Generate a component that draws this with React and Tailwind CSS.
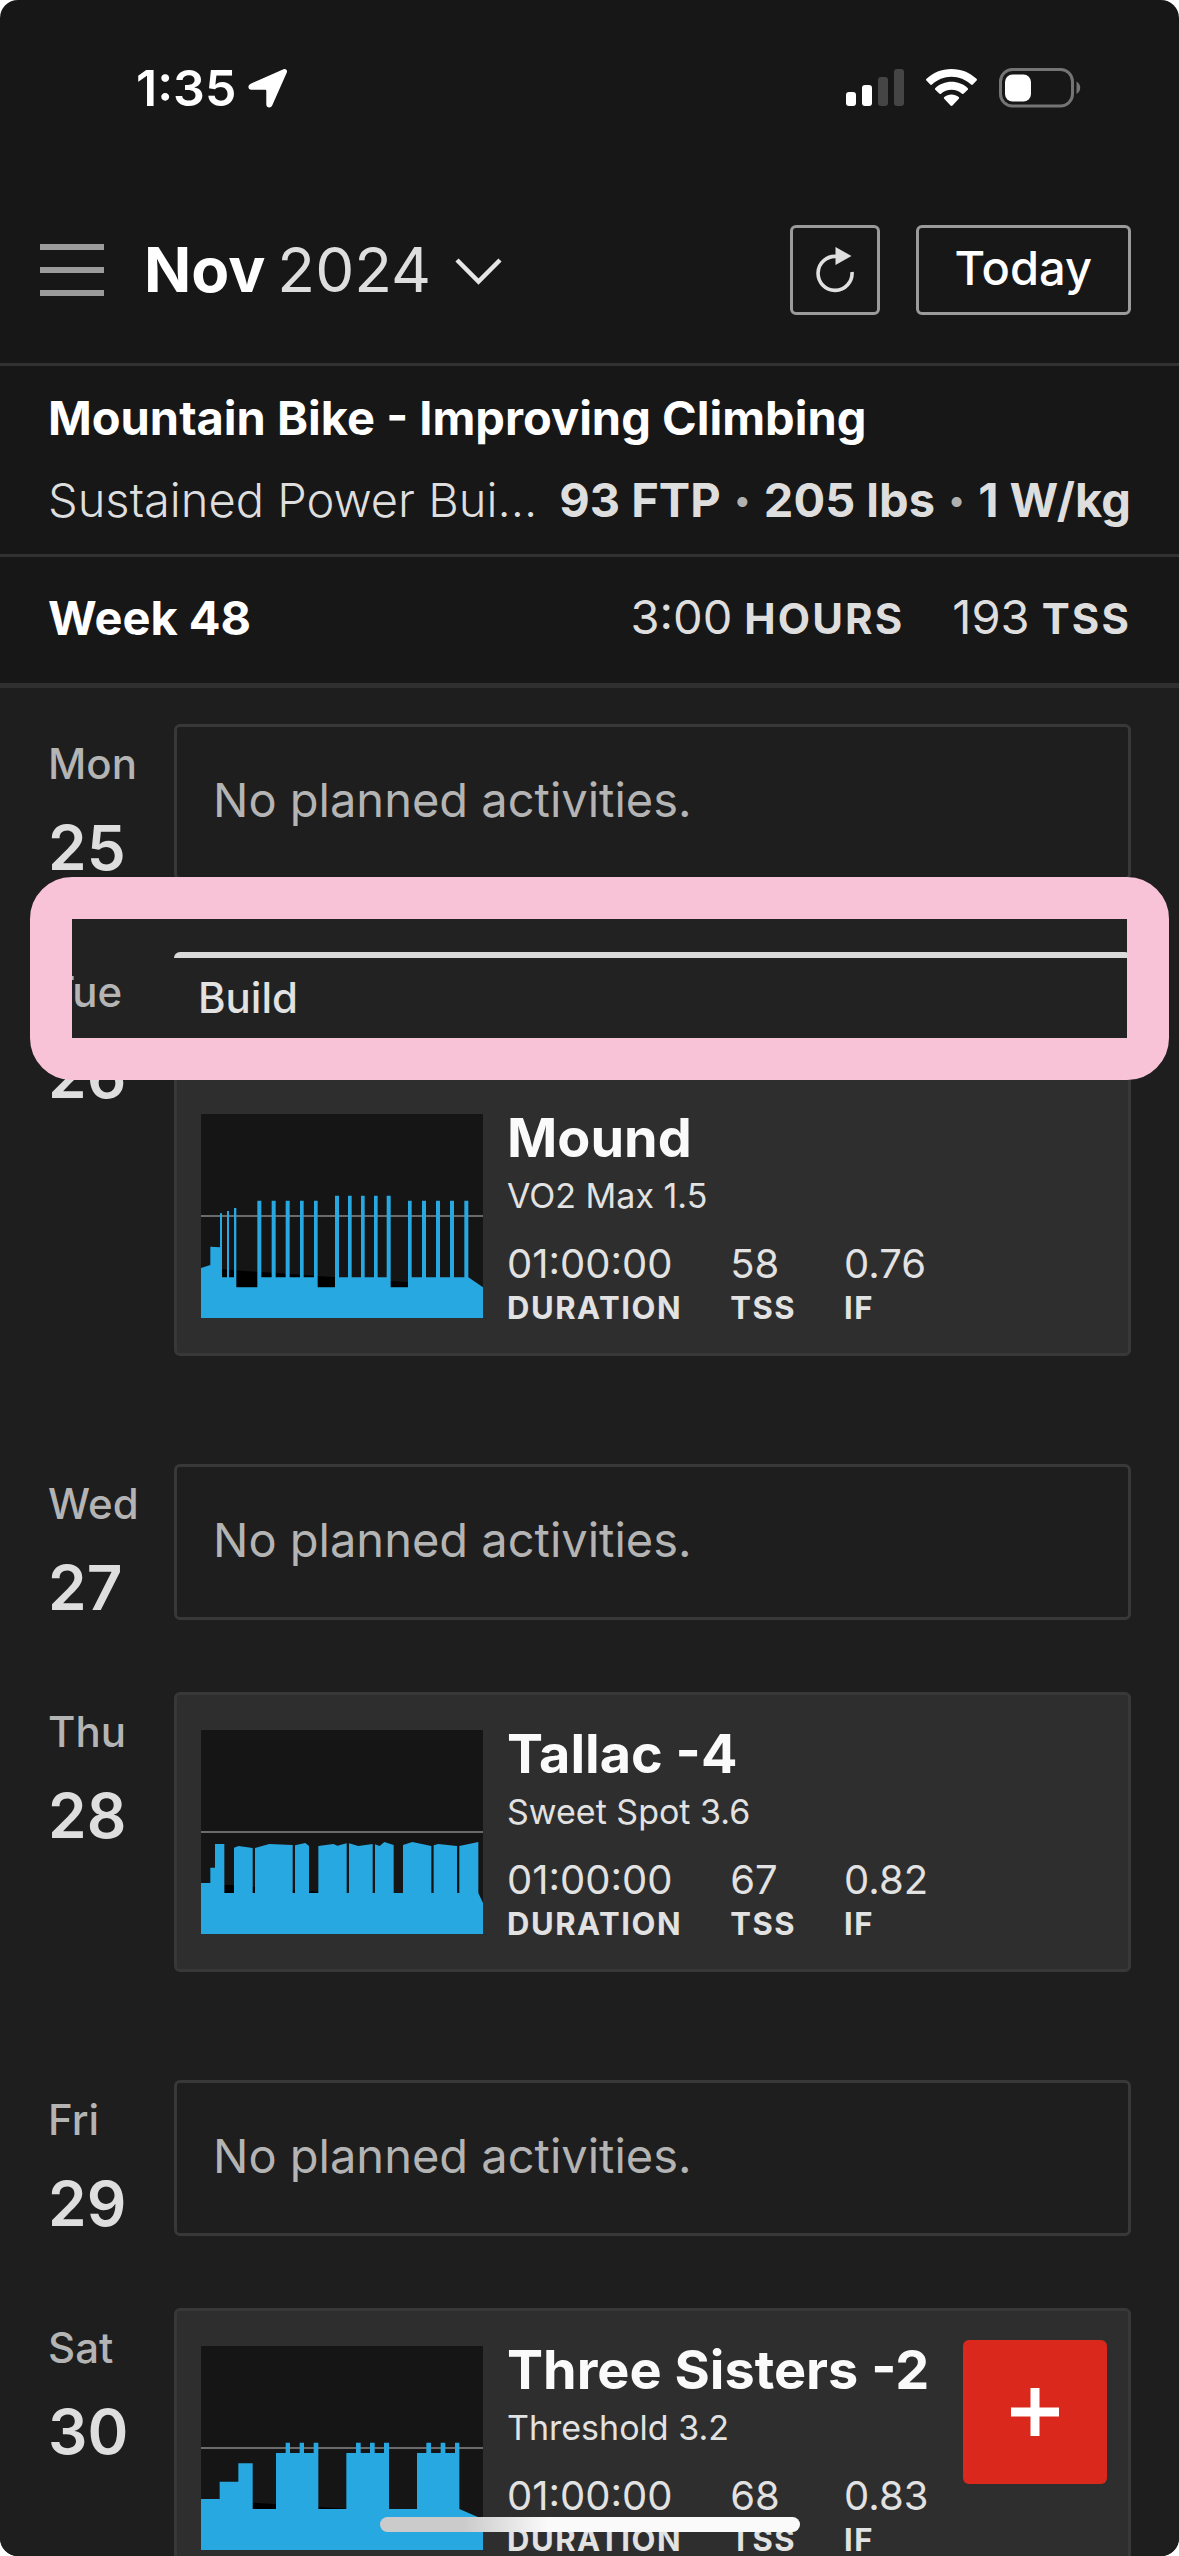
import React from "react";

const CHARTS = {
  mound: {
    viewBox: "63 72 846 612",
    line: 378,
    shade: "M127 538 L684 577 V592 H127Z",
    shape:
      "M63 684 V534 L91 525 V470 L120 472 V370 H126 V562 H141 V363 H147 V562 H162 V354 H169 V592 H232 V332 H244 V562 H275 V332 H287 V562 H317 V332 H329 V562 H360 V332 H371 V562 H402 V332 H413 V592 H465 V317 H477 V562 H504 V317 H515 V562 H543 V317 H554 V562 H582 V317 H593 V562 H620 V317 H632 V592 H684 V332 H695 V562 H726 V332 H738 V562 H768 V332 H780 V562 H810 V332 H822 V562 H853 V332 H865 V562 L909 592 V684Z",
  },
  tallac: {
    viewBox: "63 60 846 612",
    line: 366,
    shade: "M133 524 L162 526 L415 545 V549 H133Z",
    shape:
      "M63 672 V519 H91 V473 H105 V402 H133 V549 H162 V413 L176 408 L218 414 V549 H225 V414 L268 402 L338 405 V549 H345 V406 L376 399 L387 408 V549 H415 V408 L460 402 L472 407 L500 400 V549 H507 V400 L535 408 L578 402 V549 H585 V403 L599 408 L613 396 L641 405 V549 H669 V405 L697 396 L754 408 V549 H761 V406 L775 402 L831 408 V549 H838 V408 L895 396 V549 L909 579 V672Z",
  },
  sisters: {
    viewBox: "63 78 846 612",
    line: 384,
    shade: "M218 548 L499 566 V567 H218Z",
    shape:
      "M63 690 V537 H119 V485 H175 V430 H218 V567 H288 V399 H317 V368 H330 V399 H359 V368 H372 V399 H401 V368 H415 V567 H499 V399 H528 V368 H542 V399 H570 V368 H584 V399 H612 V368 H627 V567 H711 V399 H739 V368 H753 V399 H782 V368 H796 V399 H825 V368 H838 V567 L909 598 V690Z",
  },
};

const DAYS = [
  { day: "Mon", date: 25 },
  {
    day: "Tue",
    date: 26,
    phase: "Build",
    highlighted: true,
    workout: { name: "Mound", zone: "VO2 Max 1.5", tss: 58, intensity: "0.76", chart: "mound" },
  },
  { day: "Wed", date: 27 },
  {
    day: "Thu",
    date: 28,
    workout: { name: "Tallac -4", zone: "Sweet Spot 3.6", tss: 67, intensity: "0.82", chart: "tallac" },
  },
  { day: "Fri", date: 29 },
  {
    day: "Sat",
    date: 30,
    workout: { name: "Three Sisters -2", zone: "Threshold 3.2", tss: 68, intensity: "0.83", chart: "sisters" },
  },
];

function StatusBar() {
  return (
    <div className="flex h-44 items-center justify-between pr-[98px] pl-[136px]">
      <div className="flex items-center gap-3 text-white">
        <span className="text-[50px] leading-[60px] font-semibold">1:35</span>
        <svg className="h-10 w-10" viewBox="0 0 40 40" fill="currentColor" aria-hidden="true">
          <path d="M35.5 1.2 2.7 15.7C-.7 17.3-.2 21.600 3.500 21.700H17c.9 0 1.300.4 1.300 1.300v13.300c0 3.700 4.500 4.500 6 1L38.800 4.600C39.700 2.200 37.800.2 35.500 1.200Z" />
        </svg>
      </div>
      <div className="flex items-center gap-[22px]">
        <svg className="h-[38px] w-[58px]" viewBox="0 0 58 38" fill="#fff" aria-hidden="true">
          <rect x="0" y="23" width="10" height="14" rx="3" />
          <rect x="16" y="16" width="10" height="21" rx="3" />
          <rect x="32" y="8" width="10" height="29" rx="3" fill="#454545" />
          <rect x="48" y="0" width="10" height="37" rx="3" fill="#454545" />
        </svg>
        <svg className="h-[38px] w-[51px]" viewBox="0 0 51 38" fill="#fff" aria-hidden="true">
          <path d="M25.500 0C15.600 0 7 3.700.5 9.800c-.6.6-.6 1.300-.1 1.800l3.800 3.900c.5.500 1.200.5 1.800 0C11.300 10.600 18 7.700 25.500 7.700s14.200 2.900 19.500 7.800c.6.5 1.300.5 1.800 0l3.800-3.900c.5-.5.5-1.200-.1-1.800C44 3.700 35.400 0 25.500 0Z" />
          <path d="M25.500 12.800c-6.200 0-11.800 2.300-16.100 6.100-.6.5-.6 1.300-.1 1.800l3.900 3.900c.5.500 1.200.5 1.800.1 2.800-2.500 6.500-4 10.500-4s7.700 1.500 10.500 4c.6.4 1.300.4 1.800-.1l3.900-3.900c.5-.5.5-1.300-.1-1.800-4.300-3.800-9.900-6.100-16.100-6.100Z" />
          <path d="M25.500 25.600c-2.700 0-5.200 1-7.200 2.500-.6.5-.6 1.200-.1 1.700l6.300 6.700c.6.600 1.400.6 2 0l6.300-6.700c.5-.5.5-1.200-.1-1.700-2-1.500-4.500-2.500-7.200-2.500Z" />
        </svg>
        <svg className="h-10 w-[82px]" viewBox="0 0 82 40" aria-hidden="true">
          <rect x="1.500" y="1.500" width="72" height="36.500" rx="12" fill="none" stroke="#747474" strokeWidth="3" />
          <rect x="6" y="6.500" width="26" height="27" rx="7.500" fill="#fff" />
          <path d="M77.500 13.500c5 2.500 5 10 0 12.500Z" fill="#747474" />
        </svg>
      </div>
    </div>
  );
}

function TopBar() {
  return (
    <header className="flex h-[190px] items-center justify-between border-b-[3px] border-[#313131] pr-12 pl-10">
      <div className="flex items-center gap-10">
        <button type="button" aria-label="Open menu" className="text-[#9b9b9b]">
          <svg className="h-[52px] w-16" viewBox="0 0 64 52" fill="currentColor" aria-hidden="true">
            <rect x="0" y="0" width="64" height="6" />
            <rect x="0" y="23" width="64" height="6" />
            <rect x="0" y="46" width="64" height="6" />
          </svg>
        </button>
        <button type="button" className="flex items-center text-[62px] leading-[72px]">
          <span className="font-bold text-white">Nov</span>
          <span className="ml-3 text-[#dedede]">2024</span>
          <svg className="mt-1 ml-6 h-[27px] w-[47px]" viewBox="0 0 47 27" fill="none" stroke="#e6e6e6" strokeWidth="4.500" aria-hidden="true">
            <path d="M2 2 23.500 23.500 45 2" />
          </svg>
        </button>
      </div>
      <div className="flex items-center gap-9">
        <button
          type="button"
          aria-label="Refresh"
          className="flex h-[90px] w-[90px] items-center justify-center rounded-md border-[3px] border-[#9b9b9b]"
        >
          <svg className="h-[46px] w-[40px]" viewBox="0 0 40 46" aria-hidden="true">
            <path d="M22 9.500A17 17 0 1 0 37 25" fill="none" stroke="#e0e0e0" strokeWidth="3.600" />
            <path d="M20.500 0 36.500 9 20.500 18Z" fill="#e0e0e0" />
          </svg>
        </button>
        <button
          type="button"
          className="h-[90px] rounded-md border-[3px] border-[#9b9b9b] px-9 pb-1 text-[47px] leading-[60px] font-medium text-white"
        >
          Today
        </button>
      </div>
    </header>
  );
}

function PlanSummary() {
  return (
    <section className="border-b-[3px] border-[#313131] px-12 pt-[11px] pb-[13px] text-[47px] leading-[82px]">
      <h1 className="font-bold text-white">Mountain Bike - Improving Climbing</h1>
      <div className="flex justify-between gap-2 text-[#dedede]">
        <p className="min-w-0 truncate font-light">Sustained Power Bui...</p>
        <p className="flex shrink-0 items-center gap-3.5 font-bold">
          <span>93 FTP</span>
          <span className="text-[32px] text-[#b0b0b0]">•</span>
          <span>205 lbs</span>
          <span className="text-[32px] text-[#b0b0b0]">•</span>
          <span>1 W/kg</span>
        </p>
      </div>
    </section>
  );
}

function WeekSummary() {
  return (
    <section className="flex h-[131px] items-center justify-between border-b-[5px] border-[#2f2f2f] px-12 pb-1 text-[47px] leading-[60px]">
      <h2 className="font-bold text-white">Week 48</h2>
      <div className="flex gap-12 text-[#dedede]">
        <p className="flex items-baseline gap-3">
          3:00 <span className="text-[42px] font-bold tracking-wider">HOURS</span>
        </p>
        <p className="flex items-baseline gap-3">
          193 <span className="text-[42px] font-bold tracking-wider">TSS</span>
        </p>
      </div>
    </section>
  );
}

function Stat({ value, label }) {
  return (
    <div className="flex flex-col gap-2">
      <dd className="text-[40px] leading-[44px]">{value}</dd>
      <dt className="order-last text-[31px] leading-7 font-bold tracking-wider">{label}</dt>
    </div>
  );
}

function WorkoutCard({ workout, joined }) {
  const chart = CHARTS[workout.chart];
  return (
    <article
      className={
        joined
          ? "flex gap-6 rounded-b-md border-[3px] border-[#383838] bg-[#2e2e2e] pt-[35px] pb-[31px] pl-6"
          : "flex gap-6 rounded-md border-[3px] border-[#383838] bg-[#2e2e2e] pt-[35px] pb-[31px] pl-6"
      }
    >
      <svg className="h-[204px] w-[282px] shrink-0 bg-[#151515]" viewBox={chart.viewBox} role="img" aria-label={workout.name + " power profile"}>
        <path d={chart.shade} fill="#000" />
        <path d={"M63 " + chart.line + "H909"} stroke="#6b6b6b" strokeWidth="6" />
        <path d={chart.shape} fill="#27a8e0" />
      </svg>
      <div className="min-w-0 text-[#e2e2e2]">
        <h3 className="text-[54px] leading-[48px] font-bold whitespace-nowrap text-[#fafafa]">{workout.name}</h3>
        <p className="mt-3.5 text-[34px] leading-10">{workout.zone}</p>
        <dl className="mt-[26px] flex gap-12">
          <Stat value="01:00:00" label="DURATION" />
          <Stat value={workout.tss} label="TSS" />
          <Stat value={workout.intensity} label="IF" />
        </dl>
      </div>
    </article>
  );
}

function DayRow({ entry }) {
  return (
    <li className={entry.workout ? "relative mb-[108px] flex px-12" : "mb-[72px] flex px-12"}>
      <div className="w-[126px] shrink-0 pt-4">
        <p className="text-[42px] leading-[48px] font-medium text-[#b4b4b4]">{entry.day}</p>
        <p className="mt-6 -mb-4 text-[62px] leading-[72px] font-semibold text-[#dedede]">{entry.date}</p>
      </div>
      <div className="min-w-0 flex-1">
        {entry.phase && (
          <div className="rounded-t-md border-t-[6px] border-[#dadada] pt-2.5 pb-12 pl-6">
            <p className="text-[42px] leading-[60px] font-medium text-[#e2e2e2]">{entry.phase}</p>
          </div>
        )}
        {entry.workout ? (
          <WorkoutCard workout={entry.workout} joined={Boolean(entry.phase)} />
        ) : (
          <p className="rounded-md border-[3px] border-[#383838] pt-[38px] pb-[42px] pl-9 text-[47px] leading-[70px] text-[#b4b4b4]">
            No planned activities.
          </p>
        )}
      </div>
      {entry.highlighted && (
        <div className="absolute -top-[75px] right-[10px] left-[30px] h-[203px] rounded-[42px] border-[42px] border-[#f8c2d7] bg-white/[0.02]" />
      )}
    </li>
  );
}

export default function App() {
  return (
    <div className="h-screen bg-white">
      <div className="relative flex h-full flex-col overflow-hidden rounded-[18px] bg-[#171717] font-['Inter',sans-serif]">
        <StatusBar />
        <TopBar />
        <PlanSummary />
        <WeekSummary />
        <main className="min-h-0 flex-1 overflow-hidden bg-[#1e1e1e] pt-9">
          <ul>
            {DAYS.map((entry) => (
              <DayRow key={entry.date} entry={entry} />
            ))}
          </ul>
        </main>
        <button
          type="button"
          aria-label="Add activity"
          className="absolute right-[72px] bottom-[72px] flex h-36 w-36 items-center justify-center rounded-md bg-[#da291c]"
        >
          <svg className="h-12 w-12" viewBox="0 0 48 48" fill="#fff" aria-hidden="true">
            <path d="M19.500 0h9v19.500H48v9H28.500V48h-9V28.500H0v-9h19.500Z" />
          </svg>
        </button>
        <div className="absolute inset-x-0 bottom-6 flex justify-center">
          <div className="h-[15px] w-[420px] rounded-full bg-linear-to-r from-[#cbcbcb] from-20% to-[#fafafa] to-40%" />
        </div>
      </div>
    </div>
  );
}
